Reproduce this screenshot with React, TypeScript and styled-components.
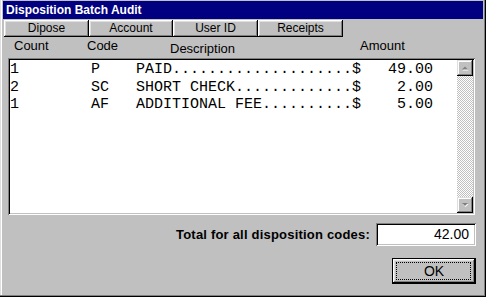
import React from 'react';
import styled, { createGlobalStyle } from 'styled-components';

const Global = createGlobalStyle`
  html, body { margin: 0; padding: 0; background: #c0c0c0; }
  body { font-family: "Liberation Sans", Arial, sans-serif; }
  * { box-sizing: border-box; }
`;

const Window = styled.div`
  width: 486px;
  height: 297px;
  background: #c0c0c0;
  padding: 1px 3px 3px 3px;
  box-shadow: inset -1px -1px #000, inset -2px -2px #808080, inset 1px 0 #dfdfdf, inset 2px 0 #fff;
  display: flex;
  flex-direction: column;
`;

const TitleBar = styled.div`
  height: 18px;
  background: #000080;
  color: #fff;
  font-weight: bold;
  font-size: 12px;
  line-height: 18px;
  padding-left: 3px;
`;

const TabBar = styled.div`
  display: flex;
  margin: 1px 0 0 1px;
`;

const Tab = styled.button<{ $w: number }>`
  width: ${p => p.$w}px;
  height: 17px;
  padding: 0;
  border: none;
  background: #c0c0c0;
  font-family: "Liberation Sans", Arial, sans-serif;
  font-size: 12px;
  color: #000;
  line-height: 17px;
  box-shadow: inset -1px -1px #000, inset 1px 1px #fff, inset -2px -2px #808080, inset 2px 2px #dfdfdf;
`;

const HeaderRow = styled.div`
  display: flex;
  height: 21px;
  padding-left: 11px;
  font-size: 13px;
  line-height: 14px;
  color: #000;
`;

const HeaderCell = styled.div<{ $w?: number; $top: number }>`
  width: ${p => (p.$w ? `${p.$w}px` : 'auto')};
  padding-top: ${p => p.$top}px;
`;

const ListBox = styled.div`
  margin-left: 5px;
  width: 467px;
  height: 157px;
  background: #fff;
  display: flex;
  box-shadow: inset 1px 1px #808080, inset -1px -1px #fff, inset 2px 2px #000, inset -2px -2px #c0c0c0;
  padding: 2px;
`;

const Rows = styled.div`
  flex: 1;
  padding: 1px 0 0 0;
  font-family: "Liberation Mono", "Courier New", monospace;
  font-size: 15px;
  line-height: 17.5px;
  color: #000;
`;

const Row = styled.div`
  display: grid;
  grid-template-columns: 9ch 5ch 24ch 1ch 8ch;
  white-space: pre;
`;

const Amount = styled.span`
  text-align: right;
`;

const ScrollBar = styled.div`
  width: 16px;
  display: flex;
  flex-direction: column;
  background-color: #fff;
  background-image: repeating-conic-gradient(#c0c0c0 0 25%, #fff 0 50%);
  background-size: 2px 2px;
`;

const Track = styled.div`
  flex: 1;
`;

const ScrollButton = styled.div`
  width: 16px;
  height: 16px;
  background: #c0c0c0;
  box-shadow: inset -1px -1px #000, inset 1px 1px #dfdfdf, inset -2px -2px #808080, inset 2px 2px #fff;
  display: flex;
  align-items: center;
  justify-content: center;
`;

const TotalRow = styled.div`
  display: flex;
  justify-content: flex-end;
  align-items: center;
  margin-top: 8px;
  padding-right: 7px;
`;

const TotalLabel = styled.div`
  font-weight: bold;
  font-size: 13px;
  letter-spacing: 0.2px;
  color: #000;
  margin-right: 6px;
`;

const TotalBox = styled.div`
  width: 100px;
  height: 23px;
  background: #fff;
  box-shadow: inset 1px 1px #808080, inset -1px -1px #fff, inset 2px 2px #000, inset -2px -2px #c0c0c0;
  font-size: 14px;
  line-height: 23px;
  text-align: right;
  padding-right: 7px;
  color: #000;
`;

const OkButton = styled.button`
  align-self: flex-end;
  margin: 12px 7px 0 0;
  width: 84px;
  height: 26px;
  padding: 0;
  border: 1px solid #000;
  background: #c0c0c0;
  font-family: "Liberation Sans", Arial, sans-serif;
  font-size: 14px;
  color: #000;
  box-shadow: inset -1px -1px #000, inset 1px 1px #fff, inset -2px -2px #808080, inset 2px 2px #dfdfdf;
  position: relative;
  &::after {
    content: '';
    position: absolute;
    inset: 3px 4px 3px 3px;
    border: 1px dotted #000;
  }
`;

const Arrow = ({ dir }: { dir: 'up' | 'down' }) => (
  <svg width="9" height="6" viewBox="0 0 9 6">
    {dir === 'up' ? (
      <>
        <path d="M1.5 5.5 L4.5 2.5 L7.5 5.5 Z" fill="#fff" />
        <path d="M1 4.5 L4 1.5 L7 4.5 Z" fill="#808080" />
      </>
    ) : (
      <>
        <path d="M1.5 2 L7.5 2 L4.5 5 Z" fill="#fff" />
        <path d="M1 1 L7 1 L4 4 Z" fill="#808080" />
      </>
    )}
  </svg>
);

const data = [
  { count: '1', code: 'P', desc: 'PAID', amount: '49.00' },
  { count: '2', code: 'SC', desc: 'SHORT CHECK', amount: '2.00' },
  { count: '1', code: 'AF', desc: 'ADDITIONAL FEE', amount: '5.00' },
];

export default function App() {
  return (
    <Window>
      <Global />
      <TitleBar>Disposition Batch Audit</TitleBar>
      <TabBar>
        <Tab $w={85}>Dipose</Tab>
        <Tab $w={84}>Account</Tab>
        <Tab $w={85}>User ID</Tab>
        <Tab $w={85}>Receipts</Tab>
      </TabBar>
      <HeaderRow>
        <HeaderCell $w={73} $top={2}>Count</HeaderCell>
        <HeaderCell $w={83} $top={2}>Code</HeaderCell>
        <HeaderCell $w={190} $top={5}>Description</HeaderCell>
        <HeaderCell $top={2}>Amount</HeaderCell>
      </HeaderRow>
      <ListBox>
        <Rows>
          {data.map((r, i) => (
            <Row key={i}>
              <span>{r.count}</span>
              <span>{r.code}</span>
              <span>{r.desc.padEnd(24, '.')}</span>
              <span>$</span>
              <Amount>{r.amount}</Amount>
            </Row>
          ))}
        </Rows>
        <ScrollBar>
          <ScrollButton><Arrow dir="up" /></ScrollButton>
          <Track />
          <ScrollButton><Arrow dir="down" /></ScrollButton>
        </ScrollBar>
      </ListBox>
      <TotalRow>
        <TotalLabel>Total for all disposition codes:</TotalLabel>
        <TotalBox>42.00</TotalBox>
      </TotalRow>
      <OkButton>OK</OkButton>
    </Window>
  );
}
